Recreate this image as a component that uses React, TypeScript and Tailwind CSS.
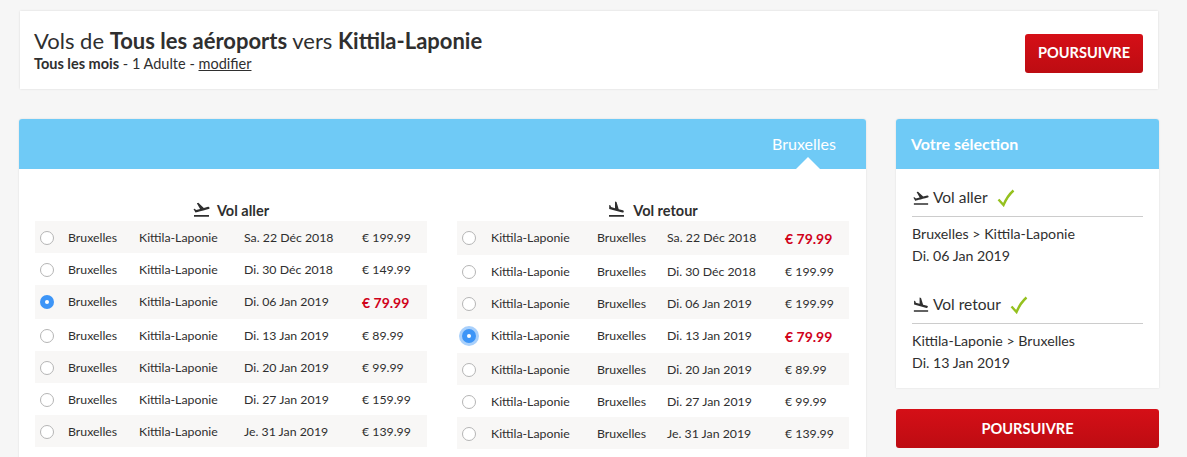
import { MdFlightLand, MdFlightTakeoff } from "react-icons/md";

type Flight = {
  from: string;
  to: string;
  date: string;
  price: string;
  promo?: boolean;
  checked?: boolean;
  focus?: boolean;
  tall?: boolean;
};

const aller: Flight[] = [
  { from: "Bruxelles", to: "Kittila-Laponie", date: "Sa. 22 Déc 2018", price: "€ 199.99" },
  { from: "Bruxelles", to: "Kittila-Laponie", date: "Di. 30 Déc 2018", price: "€ 149.99" },
  { from: "Bruxelles", to: "Kittila-Laponie", date: "Di. 06 Jan 2019", price: "€ 79.99", promo: true, checked: true, tall: true },
  { from: "Bruxelles", to: "Kittila-Laponie", date: "Di. 13 Jan 2019", price: "€ 89.99" },
  { from: "Bruxelles", to: "Kittila-Laponie", date: "Di. 20 Jan 2019", price: "€ 99.99" },
  { from: "Bruxelles", to: "Kittila-Laponie", date: "Di. 27 Jan 2019", price: "€ 159.99" },
  { from: "Bruxelles", to: "Kittila-Laponie", date: "Je. 31 Jan 2019", price: "€ 139.99" },
];

const retour: Flight[] = [
  { from: "Kittila-Laponie", to: "Bruxelles", date: "Sa. 22 Déc 2018", price: "€ 79.99", promo: true, tall: true },
  { from: "Kittila-Laponie", to: "Bruxelles", date: "Di. 30 Déc 2018", price: "€ 199.99" },
  { from: "Kittila-Laponie", to: "Bruxelles", date: "Di. 06 Jan 2019", price: "€ 199.99" },
  { from: "Kittila-Laponie", to: "Bruxelles", date: "Di. 13 Jan 2019", price: "€ 79.99", promo: true, checked: true, focus: true, tall: true },
  { from: "Kittila-Laponie", to: "Bruxelles", date: "Di. 20 Jan 2019", price: "€ 89.99" },
  { from: "Kittila-Laponie", to: "Bruxelles", date: "Di. 27 Jan 2019", price: "€ 99.99" },
  { from: "Kittila-Laponie", to: "Bruxelles", date: "Je. 31 Jan 2019", price: "€ 139.99" },
];

function Radio({ checked, focus }: { checked?: boolean; focus?: boolean }) {
  if (checked) {
    return (
      <span
        className={`flex h-[14px] w-[14px] items-center justify-center rounded-full bg-[#3d95f7] ${
          focus ? "shadow-[0_0_0_3px_#a9d0fb]" : ""
        }`}
      >
        <span className="h-[4px] w-[4px] rounded-full bg-white" />
      </span>
    );
  }
  return <span className="h-[14px] w-[14px] rounded-full border border-[#b5b5b5] bg-white" />;
}

function FlightTable({ title, flights, back }: { title: string; flights: Flight[]; back?: boolean }) {
  const Icon = back ? MdFlightLand : MdFlightTakeoff;
  return (
    <div className="w-[392px]">
      <div
        className={`flex h-[21px] items-start justify-center text-[14.5px] font-bold leading-[18px] text-[#2f2f2f] ${
          back ? "gap-[7px]" : "gap-[6px]"
        }`}
      >
        <Icon className="text-[19px]" />
        <span className="mr-[1px] pt-[2px]">{title}</span>
      </div>
      <div className="text-[12.3px] text-[#2f2f2f]">
        {flights.map((f, i) => (
          <div
            key={f.date}
            className={`flex items-center pt-[2px] ${f.tall ? "h-[34px] pb-[2px]" : "h-[32px]"} ${
              i % 2 === 0 ? "bg-[#f8f7f6]" : "bg-white"
            }`}
          >
            <div className={`ml-[5px] flex shrink-0 ${back ? "w-[29px]" : "w-[28px]"}`}>
              <Radio checked={f.checked} focus={f.focus} />
            </div>
            <div className={back ? "w-[106px] shrink-0" : "w-[71px] shrink-0"}>{f.from}</div>
            <div className={back ? "w-[70px] shrink-0" : "w-[105px] shrink-0"}>{f.to}</div>
            <div className="w-[118px] shrink-0">{f.date}</div>
            <div className={f.promo ? "text-[14px] font-bold text-[#d0021b]" : ""}>{f.price}</div>
          </div>
        ))}
      </div>
    </div>
  );
}

function Selection({ title, route, date, back }: { title: string; route: string; date: string; back?: boolean }) {
  const Icon = back ? MdFlightLand : MdFlightTakeoff;
  return (
    <div>
      <div className="flex h-[34px] items-center border-b border-[#cccccc] pb-[3px] text-[15.5px] text-[#2f2f2f]">
        <Icon className="mr-[3px] text-[18px]" />
        <span>{title}</span>
        <svg viewBox="0 0 18 18" className="ml-[9px] h-[18px] w-[18px]">
          <path d="M1.5 10.5 L6.5 16 C9 10 12 5.5 16.5 1.5" fill="none" stroke="#95c11f" strokeWidth="2.4" />
        </svg>
      </div>
      <div className="pt-[6px] text-[14.2px] leading-[22px] text-[#2f2f2f]">
        <div>{route}</div>
        <div>{date}</div>
      </div>
    </div>
  );
}

function RedButton({ className }: { className: string }) {
  return (
    <button
      type="button"
      className={`rounded-[3px] bg-gradient-to-b from-[#d50f17] to-[#bd0c12] text-[14.6px] font-bold text-white ${className}`}
    >
      POURSUIVRE
    </button>
  );
}

export default function App() {
  return (
    <div className="h-[457px] overflow-hidden bg-[#f6f6f6] font-['Lato',sans-serif]">
      <div className="ml-[20px] mt-[11px] flex h-[78px] w-[1138px] items-center justify-between bg-white pl-[14px] pr-[15px] shadow-[0_0_2px_rgba(0,0,0,0.12)]">
        <div className="text-[#2f2f2f]">
          <div className="text-[22px] leading-[28px]">
            Vols de <b>Tous les aéroports</b> vers <b>Kittila-Laponie</b>
          </div>
          <div className="text-[14.5px] leading-[18px]">
            <b>Tous les mois</b> - 1 Adulte - <span className="underline">modifier</span>
          </div>
        </div>
        <RedButton className="mt-[6px] h-[39px] w-[118px]" />
      </div>

      <div className="ml-[19px] mt-[30px] flex items-start gap-[30px]">
        <div className="w-[847px] overflow-hidden rounded-t-[3px] bg-white shadow-[0_0_2px_rgba(0,0,0,0.12)]">
          <div className="relative flex h-[50px] items-center justify-end bg-[#6fcaf6] pr-[30px] text-[16px] text-white">
            Bruxelles
            <span className="absolute bottom-0 right-[46px] h-0 w-0 border-x-[12px] border-b-[12px] border-x-transparent border-b-white" />
          </div>
          <div className="flex h-[300px] justify-between pl-[16px] pr-[17px] pt-[31px]">
            <FlightTable title="Vol aller" flights={aller} />
            <FlightTable title="Vol retour" flights={retour} back />
          </div>
        </div>

        <div className="w-[263px]">
          <div className="overflow-hidden rounded-t-[3px] bg-white shadow-[0_0_2px_rgba(0,0,0,0.12)]">
            <div className="flex h-[50px] items-center bg-[#6fcaf6] pl-[15px] text-[16px] font-bold text-white">
              Votre sélection
            </div>
            <div className="flex h-[219px] flex-col gap-[23px] px-[16px] pt-[14px]">
              <Selection title="Vol aller" route="Bruxelles > Kittila-Laponie" date="Di. 06 Jan 2019" />
              <Selection title="Vol retour" route="Kittila-Laponie > Bruxelles" date="Di. 13 Jan 2019" back />
            </div>
          </div>
          <RedButton className="mt-[21px] h-[39px] w-full" />
        </div>
      </div>
    </div>
  );
}
